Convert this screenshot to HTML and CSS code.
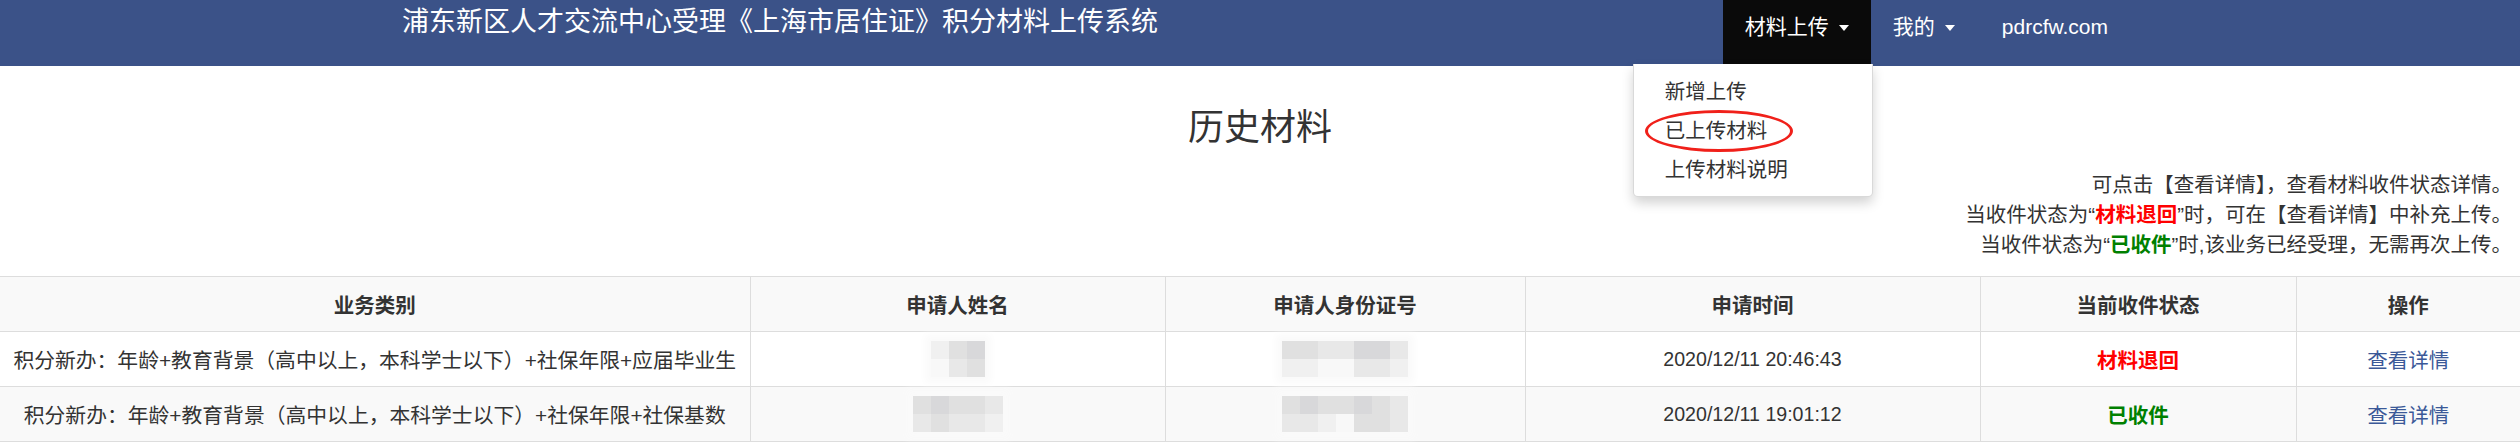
FILE: index.html
```html
<!DOCTYPE html>
<html lang="zh-CN">
<head>
    <meta charset="UTF-8">
    <title>积分材料上传系统</title>
    <link rel="stylesheet" href="styles.css">
</head>
<body>
    <nav class="navbar">
        <div class="navbar-inner">
            <div class="brand">浦东新区人才交流中心受理《上海市居住证》积分材料上传系统</div>
            <ul class="nav-menu">
                <li class="nav-item open">
                    <a class="nav-link" href="#">材料上传<span class="caret"></span></a>
                    <ul class="dropdown">
                        <li><a href="#">新增上传</a></li>
                        <li class="marked"><a href="#">已上传材料</a><span class="circle"></span></li>
                        <li><a href="#">上传材料说明</a></li>
                    </ul>
                </li>
                <li class="nav-item">
                    <a class="nav-link" href="#">我的<span class="caret"></span></a>
                </li>
                <li class="nav-item">
                    <a class="nav-link site" href="#">pdrcfw.com</a>
                </li>
            </ul>
        </div>
    </nav>

    <div class="page">
        <h2 class="page-title">历史材料</h2>
        <div class="notes">
            <p>可点击【查看详情】，查看材料收件状态详情。</p>
            <p>当收件状态为“<b class="returned">材料退回</b>”时，可在【查看详情】中补充上传。</p>
            <p>当收件状态为“<b class="received">已收件</b>”时,该业务已经受理，无需再次上传。</p>
        </div>

        <table class="record-table">
            <colgroup>
                <col class="c-type">
                <col class="c-name">
                <col class="c-id">
                <col class="c-time">
                <col class="c-state">
                <col class="c-op">
            </colgroup>
            <thead>
                <tr>
                    <th>业务类别</th>
                    <th>申请人姓名</th>
                    <th>申请人身份证号</th>
                    <th>申请时间</th>
                    <th>当前收件状态</th>
                    <th>操作</th>
                </tr>
            </thead>
            <tbody>
                <tr>
                    <td class="type">积分新办：年龄+教育背景（高中以上，本科学士以下）+社保年限+应届毕业生</td>
                    <td>
                        <span class="mosaic cols-3">
                            <i class="t1"></i><i class="t3"></i><i class="t4"></i>
                            <i class="t0"></i><i class="t2"></i><i class="t3"></i>
                        </span>
                    </td>
                    <td>
                        <span class="mosaic cols-7">
                            <i class="t3"></i><i class="t3"></i><i class="t2"></i><i class="t2"></i><i class="t4"></i><i class="t4"></i><i class="t2"></i>
                            <i class="t1"></i><i class="t1"></i><i class="t0"></i><i class="t0"></i><i class="t2"></i><i class="t2"></i><i class="t1"></i>
                        </span>
                    </td>
                    <td class="time">2020/12/11 20:46:43</td>
                    <td><b class="returned">材料退回</b></td>
                    <td><a class="detail" href="#">查看详情</a></td>
                </tr>
                <tr>
                    <td class="type">积分新办：年龄+教育背景（高中以上，本科学士以下）+社保年限+社保基数</td>
                    <td>
                        <span class="mosaic cols-5">
                            <i class="t3"></i><i class="t4"></i><i class="t3"></i><i class="t3"></i><i class="t2"></i>
                            <i class="t2"></i><i class="t3"></i><i class="t2"></i><i class="t2"></i><i class="t1"></i>
                        </span>
                    </td>
                    <td>
                        <span class="mosaic cols-7">
                            <i class="t3"></i><i class="t4"></i><i class="t3"></i><i class="t3"></i><i class="t4"></i><i class="t3"></i><i class="t2"></i>
                            <i class="t2"></i><i class="t2"></i><i class="t1"></i><i class="t0"></i><i class="t3"></i><i class="t3"></i><i class="t2"></i>
                        </span>
                    </td>
                    <td class="time">2020/12/11 19:01:12</td>
                    <td><b class="received">已收件</b></td>
                    <td><a class="detail" href="#">查看详情</a></td>
                </tr>
            </tbody>
        </table>
    </div>
</body>
</html>
```

FILE: styles.css
```css
body {
    margin: 0;
    font-family: "Liberation Sans", "Noto Sans CJK SC", sans-serif;
    font-size: 20.5px;
    color: #333;
    background: #fff;
}
a {
    text-decoration: none;
}

/* top bar */
.navbar {
    background: #3b5288;
    height: 66px;
}
.navbar-inner {
    width: 1740px;
    margin: 0 auto;
    display: flex;
    justify-content: space-between;
    align-items: flex-start;
}
.brand {
    color: #fff;
    font-size: 27px;
    line-height: 32px;
    padding: 6px 12px 0;
}
.nav-menu {
    list-style: none;
    margin: 0;
    padding: 0;
    display: flex;
}
.nav-item {
    position: relative;
}
.nav-link {
    display: block;
    height: 64px;
    box-sizing: border-box;
    padding: 12px 22px 0;
    line-height: 30px;
    font-size: 21px;
    color: #fff;
}
.nav-item.open .nav-link {
    background: #0a0a0a;
}
.nav-link.site {
    padding-left: 25px;
}
.caret {
    display: inline-block;
    margin-left: 10px;
    vertical-align: middle;
    border-top: 6px solid #fff;
    border-left: 5px solid transparent;
    border-right: 5px solid transparent;
}
.dropdown {
    position: absolute;
    top: 64px;
    right: -2px;
    width: 240px;
    box-sizing: border-box;
    margin: 0;
    padding: 8px 0 7px;
    list-style: none;
    background: #fff;
    border: 1px solid rgba(0, 0, 0, .15);
    border-top: none;
    border-radius: 0 0 5px 5px;
    box-shadow: 0 6px 12px rgba(0, 0, 0, .175);
    z-index: 10;
}
.dropdown li {
    position: relative;
}
.dropdown a {
    display: block;
    padding-left: 31px;
    line-height: 39px;
    font-size: 20.5px;
    color: #333;
}
.circle {
    position: absolute;
    left: 11px;
    top: -1px;
    width: 148px;
    height: 42px;
    box-sizing: border-box;
    border: 3.5px solid #f0201a;
    border-radius: 50%;
}

/* content */
.page-title {
    margin: 40px 0 0;
    text-align: center;
    font-size: 36px;
    font-weight: normal;
    line-height: 44px;
    color: #333;
}
.notes {
    margin-top: 20px;
    padding-right: 8px;
    text-align: right;
    line-height: 30px;
}
.notes p {
    margin: 0;
}
.returned {
    color: #f00;
}
.received {
    color: #008000;
}

.record-table {
    width: 2520px;
    margin-top: 16px;
    border-collapse: collapse;
    table-layout: fixed;
    border-top: 1px solid #ddd;
}
.c-type { width: 750px; }
.c-name { width: 415px; }
.c-id { width: 360px; }
.c-time { width: 455px; }
.c-state { width: 316px; }
.c-op { width: 224px; }
.record-table th,
.record-table td {
    height: 54px;
    padding: 0;
    text-align: center;
    vertical-align: middle;
    white-space: nowrap;
    border-bottom: 1px solid #ddd;
    border-left: 1px solid #ddd;
}
.record-table th:first-child,
.record-table td:first-child {
    border-left: none;
}
.record-table thead tr,
.record-table tbody tr:nth-child(even) {
    background: #f9f9f9;
}
.record-table th {
    font-weight: bold;
}
.record-table .type {
    font-size: 20.8px;
}
.record-table .time {
    font-size: 19.6px;
}
.detail {
    color: #3b5998;
}

/* blurred personal data */
.mosaic {
    display: inline-grid;
    grid-auto-rows: 18px;
    vertical-align: middle;
    box-shadow: 0 0 8px 6px #fafafa;
}
.cols-3 { grid-template-columns: repeat(3, 18px); }
.cols-5 { grid-template-columns: repeat(5, 18px); }
.cols-7 { grid-template-columns: repeat(7, 18px); }
.mosaic i { display: block; }
.t0 { background: #f8f8f8; }
.t1 { background: #f0f0f0; }
.t2 { background: #e8e8e8; }
.t3 { background: #e0e0e0; }
.t4 { background: #d8d8da; }
```
